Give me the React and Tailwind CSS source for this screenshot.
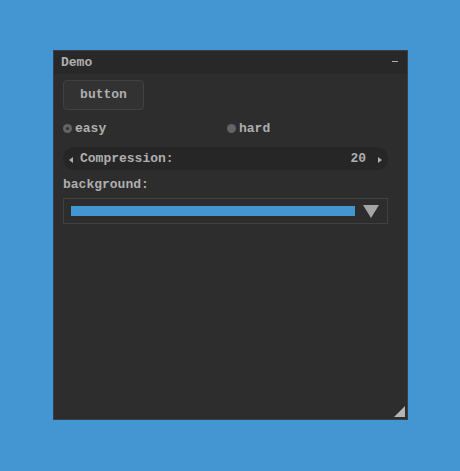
import React from "react";

// Ventana demo estilo Nuklear sobre fondo azul
export default function App() {
  return (
    <div
      className="h-[471px] w-[460px] bg-[#4496d3] pl-[53px] pt-[50px] text-[13px] font-bold text-[#afafaf]"
      style={{ fontFamily: '"Liberation Mono", "DejaVu Sans Mono", monospace' }}
    >
      <div className="relative flex h-[370px] w-[355px] flex-col border border-[#34404b] bg-[#2d2d2d]">
        {/* Header */}
        <div className="flex h-[23px] items-center justify-between bg-[#282828] pl-[7px] pr-[9px]">
          <span className="leading-none">Demo</span>
          <span className="mb-[2px] block h-[1px] w-[6px] bg-[#afafaf]" />
        </div>

        <div className="flex flex-col px-[9px]">
          {/* Button */}
          <div className="mt-[6px] flex h-[30px] w-[81px] items-center justify-center rounded-[4px] border border-[#414141] bg-[#323232]">
            button
          </div>

          {/* Radios */}
          <div className="mt-[10px] flex h-[17px] items-center">
            <div className="flex w-[164px] items-center gap-[3px]">
              <span className="flex h-[9px] w-[9px] items-center justify-center rounded-full bg-[#646464]">
                <span className="h-[3px] w-[3px] rounded-full bg-[#2d2d2d]" />
              </span>
              <span className="leading-none">easy</span>
            </div>
            <div className="flex items-center gap-[3px]">
              <span className="h-[9px] w-[9px] rounded-full bg-[#646464]" />
              <span className="leading-none">hard</span>
            </div>
          </div>

          {/* Property */}
          <div className="mt-[10px] flex h-[23px] w-[325px] items-center rounded-full bg-[#262626] pl-[5px] pr-[3px]">
            <svg width="6" height="6" viewBox="0 0 6 6" className="mt-[2px]">
              <polygon points="5,0 5,6 1,3" fill="#afafaf" />
            </svg>
            <span className="ml-[6px] flex-1 leading-none">Compression:</span>
            <span className="leading-none">20</span>
            <svg width="6" height="6" viewBox="0 0 6 6" className="ml-[11px] mr-[2px] mt-[2px]">
              <polygon points="1,0 1,6 5,3" fill="#afafaf" />
            </svg>
          </div>

          {/* Label */}
          <div className="mt-[8px] h-[14px] leading-[14px]">background:</div>

          {/* Combo */}
          <div className="mt-[6px] flex h-[26px] w-[325px] items-center border border-[#414141] bg-[#2d2d2d] pl-[7px] pr-[8px]">
            <div className="h-[10px] w-[284px] bg-[#4496d3]" />
            <svg width="16" height="15" viewBox="0 0 16 15" className="ml-auto">
              <polygon points="0,1 16,1 8,14" fill="#a5a5a5" />
            </svg>
          </div>
        </div>

        {/* Resize grip */}
        <svg width="11" height="11" viewBox="0 0 11 11" className="absolute bottom-[2px] right-[2px]">
          <polygon points="11,0 11,11 0,11" fill="#b4b4b4" />
        </svg>
      </div>
    </div>
  );
}
